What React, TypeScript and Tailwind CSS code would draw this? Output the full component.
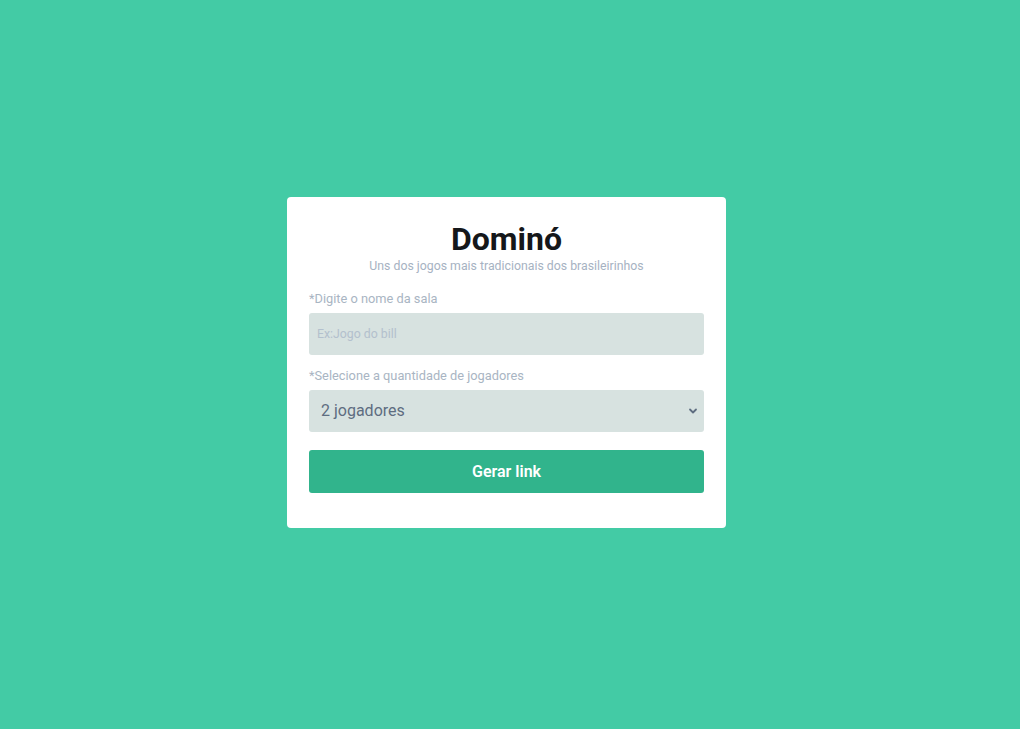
import React from "react";

export default function App() {
  return (
    <div
      className="min-h-screen w-full bg-[#43cba5] flex items-center justify-center pr-[7px]"
      style={{ fontFamily: "Roboto, 'Noto Sans', sans-serif" }}
    >
      <div className="w-[439px] bg-white rounded-[4px] px-[22px] pt-[23px] pb-[35px] mb-[4px]">
        <h1 className="text-center text-[32px] leading-[38px] font-bold text-[#15171a]">Dominó</h1>
        <p className="text-center text-[12.3px] leading-[16px] text-[#a6b2c2]">
          Uns dos jogos mais tradicionais dos brasileirinhos
        </p>
        <label className="block mt-[17px] text-[12.8px] leading-[16px] text-[#a9b5c3]">*Digite o nome da sala</label>
        <input
          className="mt-[6px] w-full h-[42px] rounded-[3px] bg-[#d7e2e0] px-[8px] text-[12.3px] text-[#5a6a7f] placeholder:text-[#b3c0cd] outline-none"
          placeholder="Ex:Jogo do bill"
        />
        <label className="block mt-[13px] text-[12.8px] leading-[16px] text-[#a9b5c3]">*Selecione a quantidade de jogadores</label>
        <div className="relative mt-[6px]">
          <select className="appearance-none w-full h-[42px] rounded-[3px] bg-[#d7e2e0] pl-[12px] text-[16px] text-[#5e6d80] outline-none">
            <option>2 jogadores</option>
            <option>3 jogadores</option>
            <option>4 jogadores</option>
          </select>
          <svg
            className="absolute right-[5px] top-1/2 -translate-y-1/2 pointer-events-none"
            width="12"
            height="12"
            viewBox="0 0 12 12"
            fill="none"
          >
            <path d="M3 4.5 L6 7.5 L9 4.5" stroke="#5e6d80" strokeWidth="1.8" strokeLinecap="round" strokeLinejoin="round" />
          </svg>
        </div>
        <button className="mt-[18px] w-full h-[43px] rounded-[3px] bg-[#31b48c] text-white text-[16px] font-semibold">
          Gerar link
        </button>
      </div>
    </div>
  );
}
